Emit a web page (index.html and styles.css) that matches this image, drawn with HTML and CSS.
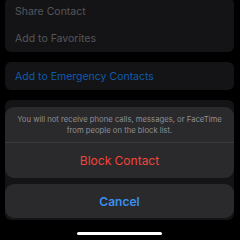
FILE: index.html
```html
<!DOCTYPE html>
<html>
<head>
<meta charset="utf-8">
<link rel="stylesheet" href="styles.css">
</head>
<body>
<div class="screen">
  <div class="content">
    <div class="card card-first">
      <div class="row">Share Contact</div>
      <div class="row">Add to Favorites</div>
    </div>
    <div class="card">
      <div class="row row-blue">Add to Emergency Contacts</div>
    </div>
    <div class="card card-tall"></div>
  </div>
  <div class="sheet">
    <div class="group">
      <div class="message">You will not receive phone calls, messages, or FaceTime from people on the block list.</div>
      <div class="action destructive">Block Contact</div>
    </div>
    <div class="cancel">Cancel</div>
  </div>
  <div class="home-indicator"></div>
</div>
</body>
</html>
```
FILE: styles.css
```css
html, body {
  margin: 0;
  padding: 0;
  background: #000;
}
.screen {
  position: relative;
  width: 240px;
  height: 240px;
  overflow: hidden;
  background: #000;
  font-family: Inter, "Liberation Sans", sans-serif;
}
.content {
  display: flex;
  flex-direction: column;
  gap: 10px;
  padding: 0 6px 0 5px;
  margin-top: -2px;
}
.card {
  background: #141416;
  border-radius: 6px;
  display: flex;
  flex-direction: column;
}
.card-tall {
  height: 120px;
}
.row {
  height: 27px;
  display: flex;
  align-items: center;
  padding-left: 10px;
  font-size: 10.5px;
  color: #56565a;
}
.card + .card .row {
  height: 28px;
}
.row-blue {
  color: #0f5bab;
}
.sheet {
  position: absolute;
  left: 5px;
  right: 6px;
  top: 107px;
  display: flex;
  flex-direction: column;
  gap: 6px;
}
.group {
  background: #2a2a2c;
  border-radius: 9px;
  display: flex;
  flex-direction: column;
}
.message {
  height: 36px;
  box-sizing: border-box;
  padding: 0 4px;
  display: flex;
  align-items: center;
  justify-content: center;
  text-align: center;
  font-size: 7.7px;
  line-height: 11px;
  color: #8e8e93;
  border-bottom: 1px solid #3a3a3c;
}
.action {
  height: 35px;
  display: flex;
  align-items: center;
  justify-content: center;
  font-size: 12px;
}
.destructive {
  color: #f2443a;
}
.cancel {
  height: 34px;
  background: #2a2a2c;
  border-radius: 9px;
  display: flex;
  align-items: center;
  justify-content: center;
  font-size: 12px;
  font-weight: 600;
  color: #3a8ff0;
}
.home-indicator {
  position: absolute;
  left: 77px;
  top: 232px;
  width: 85px;
  height: 3px;
  border-radius: 2px;
  background: #fff;
}
```
